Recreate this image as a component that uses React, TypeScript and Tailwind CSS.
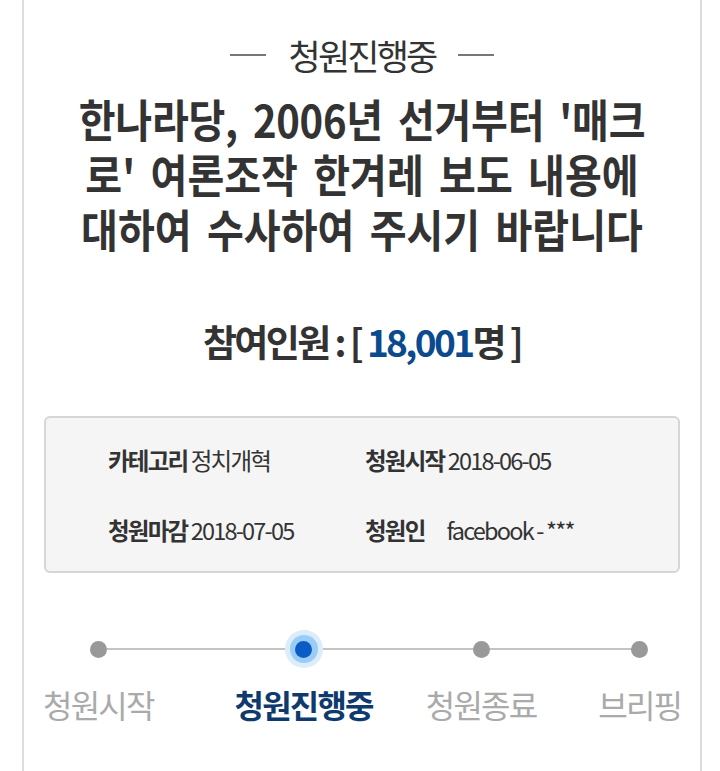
import React from 'react';

const font = { fontFamily: '"Noto Sans CJK KR", "Noto Sans", sans-serif' };

const steps = [
    { label: '청원시작', active: false, gap: '' },
    { label: '청원진행중', active: true, gap: 'ml-[81px]' },
    { label: '청원종료', active: false, gap: 'ml-[53px]' },
    { label: '브리핑', active: false, gap: 'ml-[62px]' },
];

export default function App() {
    return (
        <div className="min-h-screen bg-white pl-[22px] pr-[18px]" style={font}>
            <div className="min-h-[771px] border-x-2 border-[#dddddd] bg-white">
                {/* Status */}
                <div className="flex items-center justify-center gap-[22px] pt-[26px] h-[84px]">
                    <span className="block h-[2px] w-[36px] bg-[#777777]" />
                    <span className="text-[35px] leading-[40px] tracking-[-2.8px] text-[#333333]">청원진행중</span>
                    <span className="block h-[2px] w-[36px] bg-[#777777]" />
                </div>

                {/* Title */}
                <h1 className="mt-[7px] origin-center scale-x-[0.89] whitespace-nowrap text-center text-[45px] font-bold leading-[55px] [word-spacing:7px] text-[#333333]">
                    <span className="tracking-[-0.3px]">한나라당, 2006년 선거부터 '매크</span>
                    <br />
                    로' 여론조작 한겨레 보도 내용에
                    <br />
                    대하여 수사하여 주시기 바랍니다
                </h1>

                {/* Count */}
                <div className="mt-[61px] text-center text-[37px] font-bold leading-[48px] tracking-[-2.6px] text-[#333333]">
                    참여인원 : [ <span className="text-[#0b4a8f]">18,001</span>명 ]
                </div>

                {/* Info box */}
                <div className="mx-[20px] mt-[51px] h-[157px] rounded-[6px] border-2 border-[#d6d6d6] bg-[#f5f5f5] pl-[62px] pt-[26px]">
                    <div className="grid grid-cols-[257px_1fr] gap-y-[38px] text-[23.5px] leading-[32px] tracking-[-1.8px] text-[#333333]">
                        <div>
                            <span className="font-bold">카테고리</span> 정치개혁
                        </div>
                        <div>
                            <span className="font-bold">청원시작</span> 2018-06-05
                        </div>
                        <div>
                            <span className="font-bold">청원마감</span> 2018-07-05
                        </div>
                        <div>
                            <span className="font-bold">청원인</span>
                            <span className="ml-[22px]">facebook - ***</span>
                        </div>
                    </div>
                </div>

                {/* Progress */}
                <div className="relative ml-[19px] mr-[21px] mt-[61px] flex">
                    <div className="absolute left-[54px] right-[40px] top-[14px] h-[2px] bg-[#c4c4c4]" />
                    {steps.map((s) => (
                        <div key={s.label} className={`relative flex shrink-0 flex-col items-center ${s.gap}`}>
                            <div className="flex h-[30px] w-[40px] items-center justify-center">
                                {s.active ? (
                                    <div className="flex h-[38px] w-[38px] items-center justify-center rounded-full bg-[#dcecfb]">
                                        <div className="flex h-[28px] w-[28px] items-center justify-center rounded-full bg-[#99cdf5]">
                                            <div className="h-[17px] w-[17px] rounded-full bg-[#0a5cc4]" />
                                        </div>
                                    </div>
                                ) : (
                                    <div className="h-[17px] w-[17px] rounded-full bg-[#999999]" />
                                )}
                            </div>
                            <div
                                className={
                                    s.active
                                        ? 'mt-[20px] whitespace-nowrap text-[32px] font-bold leading-[40px] tracking-[-1.8px] text-[#0f3a6e]'
                                        : 'mt-[20px] whitespace-nowrap text-[32px] leading-[40px] tracking-[-1.8px] text-[#aaaaaa]'
                                }
                            >
                                {s.label}
                            </div>
                        </div>
                    ))}
                </div>
            </div>
        </div>
    );
}
